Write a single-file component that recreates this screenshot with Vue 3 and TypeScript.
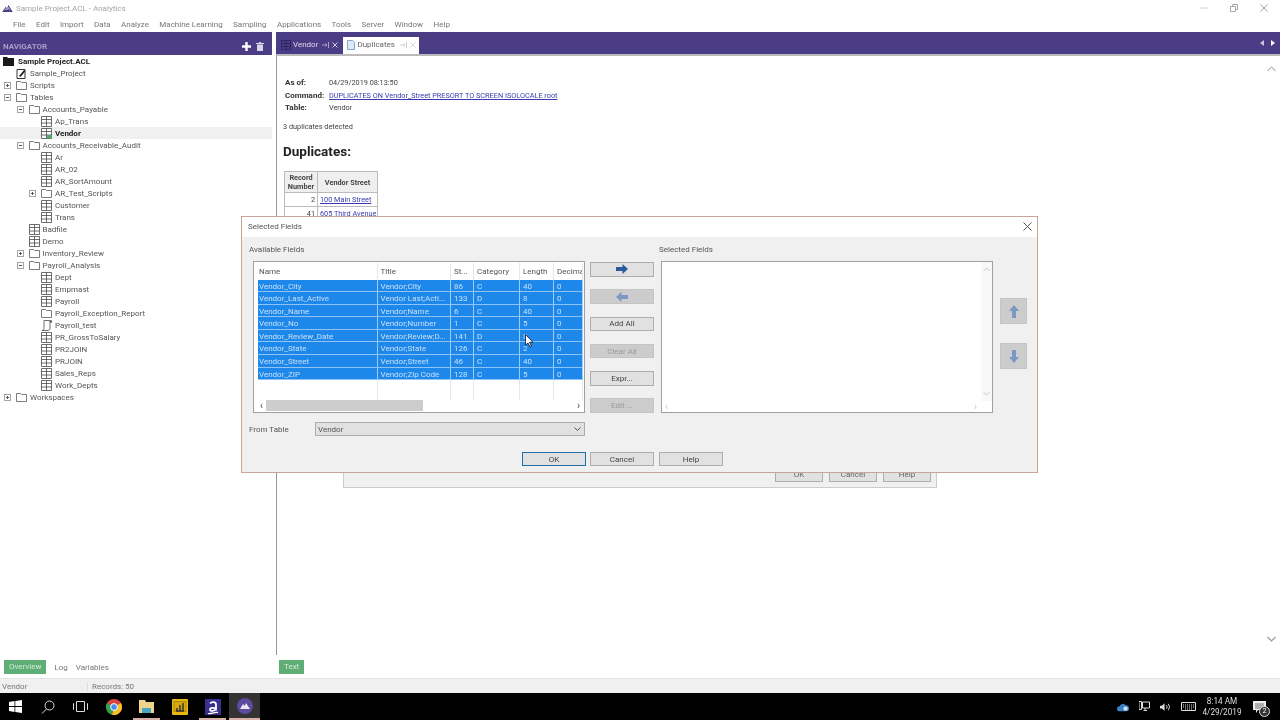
<template>
  <div class="app">
    <header class="titlebar">
      <svg class="app-logo" width="11" height="8" viewBox="0 0 12 9">
        <path d="M0 9 4 3l1.500 2L7 1l5 8z" fill="#4c3d85" />
        <path d="M3 7l1.500-2 1 1.500L7 4l1.500 3" stroke="#fff" stroke-width=".7" fill="none" />
      </svg>
      <span class="app-title">Sample Project.ACL - Analytics</span>
      <div class="window-buttons">
        <svg width="8" height="8" viewBox="0 0 8 8"><path d="M0 4h8" stroke="#d2d2d2" /></svg>
        <svg width="8" height="8" viewBox="0 0 8 8"><path d="M.5 2.500h5v5h-5zM2.500 2.500v-2h5v5h-2" stroke="#a8a8a8" fill="none" /></svg>
        <svg width="8" height="8" viewBox="0 0 8 8"><path d="M.5.5l7 7M7.500.5l-7 7" stroke="#a8a8a8" /></svg>
      </div>
    </header>

    <nav class="menubar">
      <span v-for="item in menus" :key="item">{{ item }}</span>
    </nav>

    <div class="workspace">
      <aside class="navigator">
        <div class="nav-head">
          <span class="nav-title">NAVIGATOR</span>
          <span class="nav-actions">
            <svg width="9" height="9" viewBox="0 0 9 9"><path d="M4.500 0v9M0 4.500h9" stroke="#fff" stroke-width="2.400" /></svg>
            <svg width="8" height="9" viewBox="0 0 8 9"><path d="M0 1h8v1H0zM3 0h2v1H3zM1 2.600h6V9H1z" fill="#d9d5e8" /></svg>
          </span>
        </div>
        <ul class="tree">
          <li v-for="node in tree" :key="node.label" class="tree-row" :class="{ 'tree-row--active': node.active, 'tree-row--root': node.root }" :style="{ paddingLeft: node.depth * 12.5 + 4 + 'px' }">
            <span class="expander">
              <svg v-if="node.open !== undefined" width="7" height="7" viewBox="0 0 7 7">
                <rect x=".5" y=".5" width="6" height="6" fill="#fff" stroke="#a5a5a5" />
                <path :d="node.open ? 'M2 3.500h3' : 'M2 3.500h3M3.500 2v3'" stroke="#555" />
              </svg>
            </span>
            <svg v-if="node.kind === 'table'" class="icon" width="11" height="11" viewBox="0 0 11 11">
              <path d="M.5.5h10v10H.5zM.5 3.500h10M.5 7h10M5.500.5v10" stroke="#4a4a4a" fill="#fff" stroke-width=".8" />
              <rect v-if="node.active" x="6" y="7" width="4.500" height="3.500" fill="#4caf6c" />
            </svg>
            <svg v-else-if="node.kind === 'folder'" class="icon" width="11" height="10" viewBox="0 0 11 10">
              <path d="M.5 1.500h4l1 1h5v7H.5z" stroke="#5c5c5c" fill="#fff" stroke-width=".8" />
            </svg>
            <svg v-else-if="node.kind === 'root'" class="icon" width="12" height="10" viewBox="0 0 12 10">
              <path d="M0 1h4l1 1h6v8H0z" fill="#1a1a1a" />
            </svg>
            <svg v-else-if="node.kind === 'project'" class="icon" width="11" height="11" viewBox="0 0 11 11">
              <path d="M1 1.500h8v9H1z" fill="#fff" stroke="#333" />
              <path d="M3 8l5-6 1.500 1-5 6z" fill="#222" />
            </svg>
            <svg v-else class="icon" width="11" height="11" viewBox="0 0 11 11">
              <path d="M3 .5h6v8c0 1-1 2-2 2H1c1 0 2-1 2-2z" stroke="#4a4a4a" fill="#fff" stroke-width=".8" />
              <path d="M9 .5h2v2H9z" fill="#4a4a4a" />
            </svg>
            <span class="tree-label">{{ node.label }}</span>
          </li>
        </ul>
        <div class="nav-tabs">
          <span class="green-tab">Overview</span>
          <span>Log</span>
          <span>Variables</span>
        </div>
      </aside>

      <main class="main">
        <div class="doc-head">
          <div class="doc-tab">
            <svg width="10" height="10" viewBox="0 0 10 10"><path d="M.5.5h9v9h-9zM.5 3.500h9M.5 6.500h9M5 .5v9" stroke="#2f2560" fill="none" /></svg>
            <span>Vendor</span>
            <svg class="tab-pin" width="7" height="6" viewBox="0 0 7 6"><path d="M0 3h5M3.500 1.500 5 3 3.500 4.500M6.500 0v6" stroke="#a79fcb" fill="none" /></svg>
            <svg class="tab-close" width="6" height="6" viewBox="0 0 6 6"><path d="M.5.5l5 5M5.500.5l-5 5" stroke="#cdc8e2" /></svg>
          </div>
          <div class="doc-tab doc-tab--active">
            <svg width="8" height="10" viewBox="0 0 8 10"><path d="M.5.5h5l2 2v7h-7z" stroke="#7fa6cf" fill="#dfeaf6" /></svg>
            <span>Duplicates</span>
            <svg class="tab-pin" width="7" height="6" viewBox="0 0 7 6"><path d="M0 3h5M3.500 1.500 5 3 3.500 4.500M6.500 0v6" stroke="#cfcfcf" fill="none" /></svg>
            <svg class="tab-close" width="6" height="6" viewBox="0 0 6 6"><path d="M.5.5l5 5M5.500.5l-5 5" stroke="#d4d4d4" /></svg>
          </div>
          <div class="doc-arrows">
            <span class="tri tri--left"></span>
            <span class="tri tri--right"></span>
          </div>
        </div>

        <div class="doc-body">
          <section class="report">
            <div class="report-meta">
              <b>As of:</b><span>04/29/2019 08:13:50</span>
              <b>Command:</b><a>DUPLICATES ON Vendor_Street PRESORT TO SCREEN ISOLOCALE root</a>
              <b>Table:</b><span>Vendor</span>
            </div>
            <p class="report-count">3 duplicates detected</p>
            <h2>Duplicates:</h2>
            <table class="dup-table">
              <thead>
                <tr><th>Record<br />Number</th><th>Vendor Street</th></tr>
              </thead>
              <tbody>
                <tr><td class="num">2</td><td><a>100 Main Street</a></td></tr>
                <tr><td class="num">41</td><td><a>605 Third Avenue</a></td></tr>
              </tbody>
            </table>
          </section>
          <div class="doc-scroll">
            <svg width="9" height="6" viewBox="0 0 9 6"><path d="M.5 5l4-4 4 4" stroke="#bbb" stroke-width="1.200" fill="none" /></svg>
            <svg width="9" height="6" viewBox="0 0 9 6"><path d="M.5 1l4 4 4-4" stroke="#999" stroke-width="1.200" fill="none" /></svg>
          </div>
        </div>

        <div class="main-tabs">
          <span class="green-tab">Text</span>
        </div>
      </main>
    </div>

    <footer class="statusbar">
      <span class="status-table">Vendor</span>
      <span>Records: 50</span>
    </footer>

    <div class="taskbar">
      <span class="task-cell"><svg width="13" height="13" viewBox="0 0 13 13"><path d="M0 2l5.500-.9v5H0zM6.300 1 13 0v6.100H6.300zM0 6.900h5.500v5L0 11zM6.300 6.900H13V13l-6.700-1z" fill="#fff" /></svg></span>
      <span class="task-cell"><svg width="14" height="14" viewBox="0 0 14 14"><circle cx="8.500" cy="5.500" r="4.500" fill="none" stroke="#ddd" /><path d="M5.500 9 1 13.500" stroke="#ddd" /></svg></span>
      <span class="task-cell"><svg width="15" height="11" viewBox="0 0 15 11"><path d="M3.500.5h8v10h-8zM1 2.500H.5v6H1M14 2.500h.5v6H14" stroke="#ddd" fill="none" /></svg></span>
      <span class="task-cell">
        <svg width="16" height="16" viewBox="0 0 16 16">
          <circle cx="8" cy="8" r="8" fill="#dc4437" />
          <path d="M8 8 1.100 12A8 8 0 0 1 1.100 4z" fill="#2fa44f" />
          <path d="M8 8l6.900-4A8 8 0 0 1 6 15.800z" fill="#f6c026" />
          <path d="M8 8 6 15.800A8 8 0 0 1 1.100 12z" fill="#2fa44f" />
          <circle cx="8" cy="8" r="3.400" fill="#4a8af0" stroke="#fff" />
        </svg>
      </span>
      <span class="task-cell task-cell--run"><svg width="15" height="13" viewBox="0 0 15 13"><path d="M0 0h6l1 2h8v11H0z" fill="#ecd48a" /><path d="M3 8h9v5H3z" fill="#49a3c4" /></svg></span>
      <span class="task-cell"><svg width="16" height="16" viewBox="0 0 16 16"><rect width="16" height="16" rx="1" fill="#e8b80e" /><rect x="2" y="2.500" width="12" height="10" fill="#d6a90c" stroke="#7a6510" stroke-width=".5" /><path d="M4 12h8M5 12V9M8 12V6M11 12V4" stroke="#333" stroke-width="1.500" /></svg></span>
      <span class="task-cell task-cell--run"><svg width="16" height="16" viewBox="0 0 16 16"><rect width="16" height="16" fill="#3a2f8f" /><path d="M5 4.500c1.500-2 6-2 6 1v4.500C9 8.500 5 8.500 5 10.500s4 2 6-.5" stroke="#fff" stroke-width="1.800" fill="none" /><path d="M3 14.500c3 .5 6-1.500 10-1" stroke="#fff" stroke-width="1.200" fill="none" /></svg></span>
      <span class="task-cell task-cell--active">
        <svg width="16" height="16" viewBox="0 0 16 16"><circle cx="8" cy="8" r="8" fill="#5b4a9e" /><path d="M3 11l3-5 1.500 2L9 5l4 6z" fill="#e8e6f2" /></svg>
      </span>

      <div class="tray">
        <svg width="12" height="10" viewBox="0 0 14 10"><path d="M3 10a3 3 0 0 1 0-6 4 4 0 0 1 7-1 3.500 3.500 0 0 1 1 7z" fill="#3b82c4" /><circle cx="10" cy="7" r="2.500" fill="#cfe2f3" /></svg>
        <svg width="11" height="11" viewBox="0 0 11 11"><path d="M3.500 1h7v6h-7zM0 .5h2.500v8H0zM6 7v2.500M4.500 9.500H8" stroke="#ddd" fill="none" /></svg>
        <svg width="11" height="10" viewBox="0 0 12 10"><path d="M0 3.500h2L5 1v8L2 6.500H0z" fill="#ddd" /><path d="M7 3a3 3 0 0 1 0 4M9 1.500a5.500 5.500 0 0 1 0 7" stroke="#ddd" fill="none" /></svg>
        <svg class="tray-kbd" width="15" height="9" viewBox="0 0 15 9"><path d="M.5.5h14v8H.5z" stroke="#ddd" fill="none" /><path d="M2 3h11M2 5h11M4 7h7" stroke="#ddd" stroke-dasharray="1 1" /></svg>
        <div class="clock"><span>8:14 AM</span><span>4/29/2019</span></div>
        <span class="notify">
          <svg width="13" height="12" viewBox="0 0 13 12"><path d="M0 0h13v9H5l-2 3V9H0z" fill="#eee" /><path d="M2 3h9M2 5h9M2 7h6" stroke="#333" stroke-width=".7" /></svg>
          <i class="notify-badge">2</i>
        </span>
      </div>
    </div>

    <!-- options dialog that sits behind the field picker -->
    <div class="back-dialog">
      <span>OK</span><span>Cancel</span><span>Help</span>
    </div>

    <div class="dialog">
      <div class="dialog-title">
        <span>Selected Fields</span>
        <svg width="9" height="9" viewBox="0 0 9 9"><path d="M.5.5l8 8M8.500.5l-8 8" stroke="#555" /></svg>
      </div>
      <div class="dialog-body">
        <div class="field-grid">
          <label>Available Fields</label>
          <span></span>
          <label class="selected-label">Selected Fields</label>
          <span></span>

          <div class="listbox">
            <div class="list-head list-cols">
              <span v-for="col in columns" :key="col">{{ col }}</span>
            </div>
            <div v-for="row in fields" :key="row[0]" class="list-row list-cols">
              <span v-for="(cell, i) in row" :key="i">{{ cell }}</span>
            </div>
            <div class="list-empty list-cols"><span v-for="col in columns" :key="col"></span></div>
            <div class="hscroll">
              <span class="chev">‹</span>
              <span class="hscroll-track"><i class="hscroll-thumb"></i></span>
              <span class="chev">›</span>
            </div>
          </div>

          <div class="move-buttons">
            <button>
              <svg width="12" height="10" viewBox="0 0 12 10"><path d="M0 3h6.500V0L12 5 6.500 10V7H0z" fill="#2a5a9c" /></svg>
            </button>
            <button disabled>
              <svg width="12" height="10" viewBox="0 0 12 10"><path d="M12 3H5.500V0L0 5l5.500 5V7H12z" fill="#7b97c4" /></svg>
            </button>
            <button>Add All</button>
            <button disabled>Clear All</button>
            <button>Expr...</button>
            <button disabled>Edit ...</button>
          </div>

          <div class="listbox listbox--empty">
            <div class="empty-main">
              <div class="empty-area"></div>
              <div class="vscroll">
                <svg width="7" height="5" viewBox="0 0 7 5"><path d="M.5 4l3-3 3 3" stroke="#c8c8c8" fill="none" /></svg>
                <svg width="7" height="5" viewBox="0 0 7 5"><path d="M.5 1l3 3 3-3" stroke="#c8c8c8" fill="none" /></svg>
              </div>
            </div>
            <div class="hscroll hscroll--off">
              <span class="chev">‹</span>
              <span class="chev">›</span>
            </div>
          </div>

          <div class="order-buttons">
            <button disabled>
              <svg width="10" height="13" viewBox="0 0 10 13"><path d="M3 13V6H0l5-6 5 6H7v7z" fill="#7b97c4" /></svg>
            </button>
            <button disabled>
              <svg width="10" height="13" viewBox="0 0 10 13"><path d="M3 0v7H0l5 6 5-6H7V0z" fill="#7b97c4" /></svg>
            </button>
          </div>
        </div>

        <div class="from-table">
          <label>From Table</label>
          <div class="combo">
            <span>Vendor</span>
            <svg width="7" height="4" viewBox="0 0 7 4"><path d="M.5.5l3 3 3-3" stroke="#555" fill="none" /></svg>
          </div>
        </div>

        <div class="dialog-actions">
          <button class="primary">OK</button>
          <button>Cancel</button>
          <button>Help</button>
        </div>
      </div>
    </div>

    <svg class="cursor" width="9" height="14" viewBox="0 0 9 14"><path d="M.5.5V11L3 9l2 4 1.500-.7-2-4H8z" fill="#fff" stroke="#111" stroke-width=".8" /></svg>
  </div>
</template>

<script setup lang="ts">
type NodeKind = "root" | "project" | "folder" | "table" | "script";

interface TreeNode {
  label: string;
  depth: number;
  kind: NodeKind;
  open?: boolean;
  active?: boolean;
  root?: boolean;
}

const menus = ["File", "Edit", "Import", "Data", "Analyze", "Machine Learning", "Sampling", "Applications", "Tools", "Server", "Window", "Help"];

const tree: TreeNode[] = [
  { label: "Sample Project.ACL", depth: 0, kind: "root", root: true },
  { label: "Sample_Project", depth: 0, kind: "project" },
  { label: "Scripts", depth: 0, kind: "folder", open: false },
  { label: "Tables", depth: 0, kind: "folder", open: true },
  { label: "Accounts_Payable", depth: 1, kind: "folder", open: true },
  { label: "Ap_Trans", depth: 2, kind: "table" },
  { label: "Vendor", depth: 2, kind: "table", active: true },
  { label: "Accounts_Receivable_Audit", depth: 1, kind: "folder", open: true },
  { label: "Ar", depth: 2, kind: "table" },
  { label: "AR_02", depth: 2, kind: "table" },
  { label: "AR_SortAmount", depth: 2, kind: "table" },
  { label: "AR_Test_Scripts", depth: 2, kind: "folder", open: false },
  { label: "Customer", depth: 2, kind: "table" },
  { label: "Trans", depth: 2, kind: "table" },
  { label: "Badfile", depth: 1, kind: "table" },
  { label: "Demo", depth: 1, kind: "table" },
  { label: "Inventory_Review", depth: 1, kind: "folder", open: false },
  { label: "Payroll_Analysis", depth: 1, kind: "folder", open: true },
  { label: "Dept", depth: 2, kind: "table" },
  { label: "Empmast", depth: 2, kind: "table" },
  { label: "Payroll", depth: 2, kind: "table" },
  { label: "Payroll_Exception_Report", depth: 2, kind: "folder" },
  { label: "Payroll_test", depth: 2, kind: "script" },
  { label: "PR_GrossToSalary", depth: 2, kind: "table" },
  { label: "PR2JOIN", depth: 2, kind: "table" },
  { label: "PRJOIN", depth: 2, kind: "table" },
  { label: "Sales_Reps", depth: 2, kind: "table" },
  { label: "Work_Depts", depth: 2, kind: "table" },
  { label: "Workspaces", depth: 0, kind: "folder", open: false },
];

const columns = ["Name", "Title", "St...", "Category", "Length", "Decima"];

const fields: string[][] = [
  ["Vendor_City", "Vendor;City", "86", "C", "40", "0"],
  ["Vendor_Last_Active", "Vendor Last;Acti...", "133", "D", "8", "0"],
  ["Vendor_Name", "Vendor;Name", "6", "C", "40", "0"],
  ["Vendor_No", "Vendor;Number", "1", "C", "5", "0"],
  ["Vendor_Review_Date", "Vendor;Review;D...", "141", "D", "8", "0"],
  ["Vendor_State", "Vendor;State", "126", "C", "2", "0"],
  ["Vendor_Street", "Vendor;Street", "46", "C", "40", "0"],
  ["Vendor_ZIP", "Vendor;Zip Code", "128", "C", "5", "0"],
];
</script>

<style>
html,
body {
  margin: 0;
  background: #fff;
}
</style>

<style scoped>
.app {
  position: relative;
  width: 1280px;
  height: 720px;
  overflow: hidden;
  display: flex;
  flex-direction: column;
  background: #fff;
  font-family: Roboto, "Liberation Sans", sans-serif;
  font-size: 8px;
  color: #555;
  filter: blur(0.3px);
}

.titlebar {
  height: 16px;
  display: flex;
  align-items: center;
  padding-left: 2px;
  gap: 3px;
  color: #a4a4a4;
}

.window-buttons {
  margin-left: auto;
  display: flex;
  gap: 22px;
  padding-right: 12px;
}

.menubar {
  height: 16px;
  display: flex;
  align-items: center;
  gap: 10.400px;
  padding-left: 13px;
  color: #777;
}

.workspace {
  flex: 1;
  min-height: 0;
  display: flex;
}

.navigator {
  width: 272px;
  display: flex;
  flex-direction: column;
}

.nav-head {
  height: 23px;
  flex: none;
  box-sizing: border-box;
  background: #4b3c86;
  display: flex;
  align-items: center;
  justify-content: space-between;
  padding: 5px 8px 0 3px;
  color: #a79fcb;
  font-weight: 700;
}

.nav-actions {
  display: flex;
  align-items: center;
  gap: 5px;
}

.tree {
  flex: 1;
  margin: 0;
  padding: 0;
  list-style: none;
}

.tree-row {
  height: 12px;
  display: flex;
  align-items: center;
  color: #555;
  box-sizing: border-box;
}

.tree-row--active {
  background: #f0f0f0;
  color: #222;
  font-weight: 700;
}

.tree-row--root {
  color: #222;
  font-weight: 700;
}

.tree-row--root .expander {
  display: none;
}

.tree-row--root .icon {
  margin-left: -1px;
}

.expander {
  width: 12px;
  flex: none;
  display: flex;
  align-items: center;
}

.icon {
  flex: none;
  margin-right: 3px;
}

.tree-label {
  white-space: nowrap;
}

.nav-tabs {
  height: 23px;
  flex: none;
  box-sizing: border-box;
  display: flex;
  align-items: center;
  gap: 8px;
  padding: 5px 0 4px 4px;
  color: #777;
}

.green-tab {
  background: #5fae75;
  color: #d4ebda;
  padding: 0 5px;
  line-height: 14px;
}

.main {
  flex: 1;
  min-width: 0;
  display: flex;
  flex-direction: column;
  padding-left: 4px;
}

.doc-head {
  height: 22px;
  flex: none;
  background: #4b3c86;
  display: flex;
  align-items: flex-end;
  padding-left: 4px;
  gap: 2px;
  color: #dcd8ec;
}

.doc-tab {
  height: 17px;
  display: flex;
  align-items: center;
  gap: 2px;
  padding: 0 3px 2px 1px;
  box-sizing: border-box;
}

.doc-tab .tab-pin {
  margin-left: 2px;
}

.doc-tab .tab-close {
  margin-left: 1px;
}

.doc-tab--active {
  background: #fff;
  color: #666;
  padding-left: 4px;
}

.doc-tab--active .tab-pin {
  margin-left: 3px;
}

.doc-arrows {
  margin-left: auto;
  align-self: center;
  display: flex;
  gap: 7px;
  padding-right: 5px;
}

.tri {
  width: 0;
  height: 0;
  border-top: 3px solid transparent;
  border-bottom: 3px solid transparent;
}

.tri--left {
  border-right: 4px solid #c9c4df;
}

.tri--right {
  border-left: 4px solid #fff;
}

.doc-body {
  flex: 1;
  min-height: 0;
  display: flex;
  border-left: 1px solid #999;
  border-top: 2px solid #bbb;
}

.report {
  flex: 1;
  padding: 22px 0 0 6px;
  color: #444;
  font-size: 7.300px;
}

.report-meta {
  display: grid;
  grid-template-columns: 44px auto;
  justify-content: start;
  row-gap: 2.500px;
  padding-left: 2px;
  line-height: 10px;
}

.report-meta b {
  color: #333;
  font-size: 8px;
}

.report a,
.dup-table a {
  color: #3a3ab0;
  text-decoration: underline;
}

.report-count {
  margin: 9px 0 0;
  line-height: 10px;
}

.report h2 {
  margin: 11px 0 0;
  font-size: 13.500px;
  line-height: 16px;
  color: #222;
}

.dup-table {
  margin: 12px 0 0 1px;
  border-collapse: collapse;
  table-layout: fixed;
  width: 94px;
  font-size: 7.300px;
}

.dup-table th,
.dup-table td {
  border: 1px solid #bbb;
  line-height: 11px;
  padding: 1px 2px;
  white-space: nowrap;
  overflow: hidden;
}

.dup-table th {
  background: #efefef;
  color: #444;
  line-height: 9px;
  padding: 1px 0;
}

.dup-table th:first-child {
  width: 32px;
}

.dup-table .num {
  text-align: right;
}

.doc-scroll {
  width: 13px;
  flex: none;
  display: flex;
  flex-direction: column;
  justify-content: space-between;
  padding: 10px 0 13px;
}

.main-tabs {
  height: 23px;
  flex: none;
  box-sizing: border-box;
  display: flex;
  align-items: center;
  padding: 5px 0 4px 3px;
}

.statusbar {
  height: 15px;
  flex: none;
  display: flex;
  align-items: center;
  background: #f0f0f0;
  border-top: 1px solid #e4e4e4;
  box-sizing: border-box;
  color: #777;
}

.status-table {
  width: 85px;
  padding-left: 2px;
  border-right: 1px solid #ddd;
  margin-right: 4px;
}

.taskbar {
  height: 27px;
  flex: none;
  background: #000;
  display: flex;
  align-items: center;
  padding-left: 0;
  color: #ddd;
}

.task-cell {
  position: relative;
  width: 33px;
  height: 27px;
  flex: none;
  display: flex;
  align-items: center;
  justify-content: center;
}

.task-cell:first-child {
  width: 31px;
}

.task-cell--run::after {
  content: "";
  position: absolute;
  left: 3px;
  right: 3px;
  bottom: 0;
  height: 2px;
  background: #d9b0a8;
}

.task-cell--active {
  width: 31px;
  background: #333;
  border-bottom: 2px solid #d9b0a8;
  box-sizing: border-box;
}

.tray {
  margin-left: auto;
  display: flex;
  align-items: center;
  gap: 10px;
  padding-right: 14px;
}

.clock {
  display: flex;
  flex-direction: column;
  align-items: center;
  line-height: 11px;
  width: 44px;
  margin-left: -6px;
  margin-right: -1px;
  font-size: 8.200px;
}

.notify {
  position: relative;
  display: flex;
}

.notify-badge {
  position: absolute;
  right: -4px;
  bottom: -4px;
  width: 9px;
  height: 9px;
  border-radius: 50%;
  background: #333;
  border: 1px solid #ddd;
  color: #fff;
  font-size: 7px;
  line-height: 9px;
  text-align: center;
  font-style: normal;
}

.back-dialog {
  position: absolute;
  left: 343px;
  top: 440px;
  width: 594px;
  height: 48px;
  box-sizing: border-box;
  border: 1px solid #ccc;
  background: #f0f0f0;
  display: flex;
  align-items: flex-end;
  justify-content: flex-end;
  gap: 6px;
  padding: 0 5px 5px 0;
}

.back-dialog span {
  width: 48px;
  height: 16px;
  box-sizing: border-box;
  background: #e1e1e1;
  border: 1px solid #adadad;
  text-align: center;
  line-height: 16px;
  color: #666;
}

.dialog {
  position: absolute;
  left: 241px;
  top: 216px;
  width: 797px;
  height: 257px;
  box-sizing: border-box;
  border: 1px solid #c9a596;
  background: #f0f0f0;
  display: flex;
  flex-direction: column;
}

.dialog-title {
  height: 20px;
  flex: none;
  box-sizing: border-box;
  background: #fff;
  display: flex;
  align-items: center;
  justify-content: space-between;
  padding: 0 5px 2px 6px;
  color: #555;
}

.dialog-body {
  flex: 1;
  padding: 6px 0 0 7px;
}

.field-grid {
  display: grid;
  grid-template-columns: 332px 66px 332px 29px;
  grid-template-rows: 11px 152px;
  column-gap: 5px;
  row-gap: 7px;
  padding-left: 4px;
}

.field-grid label {
  margin-left: -4px;
  white-space: nowrap;
  line-height: 14px;
}

.field-grid .selected-label {
  margin-left: -2px;
}

.listbox {
  box-sizing: border-box;
  border: 1px solid #a0a0a0;
  background: #fff;
  display: flex;
  flex-direction: column;
  overflow: hidden;
  padding: 1px 1px 1px 4px;
}

.list-cols {
  display: grid;
  grid-template-columns: 119.500px 73.500px 23px 46px 34px 29px;
  white-space: nowrap;
}

.list-cols span {
  padding-left: 3px;
  overflow: hidden;
  border-right: 1px solid #e6e6e6;
}

.list-cols span:first-child {
  padding-left: 1px;
}

.list-head {
  height: 16.500px;
  line-height: 17.500px;
  flex: none;
}

.list-row {
  height: 12.600px;
  flex: none;
  line-height: 13.500px;
  background: #1e87ea;
  color: #c4e0fa;
  box-sizing: border-box;
  border-bottom: 1px solid #8fc3f3;
}

.list-row span {
  border-right: 1px solid #9ccbf6;
}

.list-empty {
  flex: 1;
}

.hscroll {
  height: 11px;
  flex: none;
  display: flex;
  align-items: center;
  justify-content: space-between;
  color: #444;
  padding: 0 3px 0 2px;
  gap: 3px;
  font-size: 10px;
  line-height: 10px;
}

.hscroll-track {
  flex: 1;
  height: 11px;
}

.hscroll-thumb {
  display: block;
  width: 157px;
  height: 11px;
  background: #cdcdcd;
}

.hscroll--off {
  color: #c8c8c8;
  padding: 0 15px 0 3px;
}

.listbox--empty {
  padding: 0;
}

.empty-main {
  flex: 1;
  display: flex;
}

.empty-area {
  flex: 1;
}

.vscroll {
  width: 11px;
  display: flex;
  flex-direction: column;
  justify-content: space-between;
  align-items: center;
  padding: 5px 0;
  background: #f8f8f8;
}

button {
  box-sizing: border-box;
  border: 1px solid #adadad;
  background: #e1e1e1;
  color: #444;
  font: inherit;
  padding: 0;
  display: flex;
  align-items: center;
  justify-content: center;
}

button:disabled {
  background: #cccccc;
  border-color: #c4c4c4;
  color: #999;
}

.move-buttons {
  width: 64px;
  display: flex;
  flex-direction: column;
  justify-content: space-between;
  padding: 1px 0 0;
}

.move-buttons button {
  height: 14.500px;
}

.order-buttons {
  display: flex;
  flex-direction: column;
  gap: 19px;
  padding: 37px 0 0 2px;
}

.order-buttons button {
  height: 26px;
}

.from-table {
  display: flex;
  align-items: center;
  margin-top: 9px;
  height: 14px;
}

.from-table label {
  width: 66px;
}

.combo {
  width: 270px;
  height: 14px;
  box-sizing: border-box;
  border: 1px solid #adadad;
  background: #e1e1e1;
  display: flex;
  align-items: center;
  justify-content: space-between;
  padding: 0 3px 0 2px;
}

.dialog-actions {
  display: flex;
  gap: 4px;
  margin: 16px 0 0 273px;
}

.dialog-actions button {
  width: 64px;
  height: 14px;
}

.dialog-actions button:last-child {
  margin-left: 1px;
}

.dialog-actions .primary {
  border: 1.500px solid #1f6fa8;
}

.cursor {
  position: absolute;
  left: 525px;
  top: 334px;
}
</style>
